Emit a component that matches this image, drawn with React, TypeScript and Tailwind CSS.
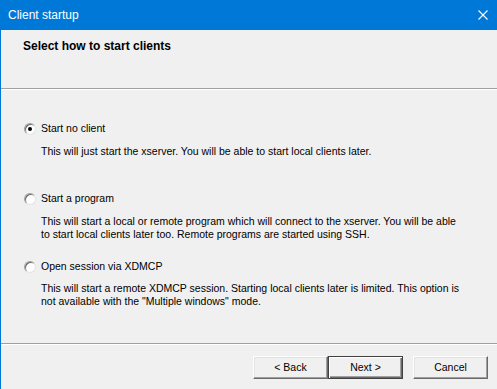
import React, { useState } from 'react';

const font = { fontFamily: '"Liberation Sans", Arial, sans-serif' };

type Choice = 'none' | 'program' | 'xdmcp';

const Radio: React.FC<{ checked: boolean }> = ({ checked }) => (
  <div className="relative w-[12px] h-[12px] rounded-full bg-white border border-t-[#a0a0a0] border-l-[#a0a0a0] border-b-[#e3e3e3] border-r-[#e3e3e3] shadow-[inset_1px_1px_#696969] flex items-center justify-center flex-shrink-0">
    {checked && <div className="w-[4px] h-[4px] rounded-full bg-black" />}
  </div>
);

const Option: React.FC<{
  label: string;
  lines: string[];
  checked: boolean;
  onClick: () => void;
  labelMt: string;
  descMt: string;
}> = ({ label, lines, checked, onClick, labelMt, descMt }) => (
  <div className={labelMt}>
    <div className="flex items-center h-[13px] pl-[23px] gap-[5px] cursor-default" onClick={onClick}>
      <Radio checked={checked} />
      <span>{label}</span>
    </div>
    <div className={`${descMt} pl-[40px] leading-[13px] whitespace-nowrap`}>
      {lines.map((l) => (
        <div key={l}>{l}</div>
      ))}
    </div>
  </div>
);

const WinButton: React.FC<{ label: string; primary?: boolean }> = ({ label, primary }) => (
  <button
    className={`w-[75px] h-[23px] bg-[#f0f0f0] text-[10.5px] text-black flex items-center justify-center ${
      primary
        ? 'border border-[#404040] shadow-[inset_1px_1px_#ffffff,inset_-1px_-1px_#696969,inset_-2px_-2px_#a0a0a0]'
        : 'border border-t-white border-l-white border-b-[#696969] border-r-[#696969] shadow-[inset_-1px_-1px_#a0a0a0,inset_1px_1px_#e3e3e3]'
    }`}
  >
    {label}
  </button>
);

export default function App() {
  const [choice, setChoice] = useState<Choice>('none');

  return (
    <div className="w-[497px] h-[389px] bg-[#f0f0f0] flex flex-col border-l border-[#0078d7] overflow-hidden" style={font}>
      {/* Title bar */}
      <div className="h-[30px] bg-[#0078d7] flex items-center justify-between pl-[8px] pr-[8px] flex-shrink-0 -ml-px">
        <span className="text-white text-[12px]">Client startup</span>
        <svg width="10" height="10" viewBox="0 0 10 10" className="mr-[1px]">
          <path d="M0.5 0.5 L9.5 9.5 M9.5 0.5 L0.5 9.5" stroke="white" strokeWidth="1.1" />
        </svg>
      </div>

      {/* Header */}
      <div className="h-[58px] pt-[9px] pl-[22px] flex-shrink-0">
        <div className="text-[12px] font-bold leading-[14px] text-black">Select how to start clients</div>
      </div>
      <div className="h-px bg-[#a0a0a0]" />
      <div className="h-px bg-white" />

      {/* Body */}
      <div className="h-[253px] pt-[32px] text-[10.5px] text-black leading-[13px] flex-shrink-0">
        <Option
          label="Start no client"
          lines={['This will just start the xserver. You will be able to start local clients later.']}
          checked={choice === 'none'}
          onClick={() => setChoice('none')}
          labelMt="mt-0"
          descMt="mt-[10px]"
        />
        <Option
          label="Start a program"
          lines={[
            'This will start a local or remote program which will connect to the xserver. You will be able',
            'to start local clients later too. Remote programs are started using SSH.',
          ]}
          checked={choice === 'program'}
          onClick={() => setChoice('program')}
          labelMt="mt-[34px]"
          descMt="mt-[10px]"
        />
        <Option
          label="Open session via XDMCP"
          lines={[
            'This will start a remote XDMCP session. Starting local clients later is limited. This option is',
            'not available with the "Multiple windows" mode.',
          ]}
          checked={choice === 'xdmcp'}
          onClick={() => setChoice('xdmcp')}
          labelMt="mt-[19px]"
          descMt="mt-[9px]"
        />
      </div>

      {/* Footer */}
      <div className="h-px bg-[#a0a0a0]" />
      <div className="h-px bg-white" />
      <div className="flex justify-end pt-[11px] pr-[9px]">
        <WinButton label="< Back" />
        <WinButton label="Next >" primary />
        <div className="w-[10px]" />
        <WinButton label="Cancel" />
      </div>
    </div>
  );
}
